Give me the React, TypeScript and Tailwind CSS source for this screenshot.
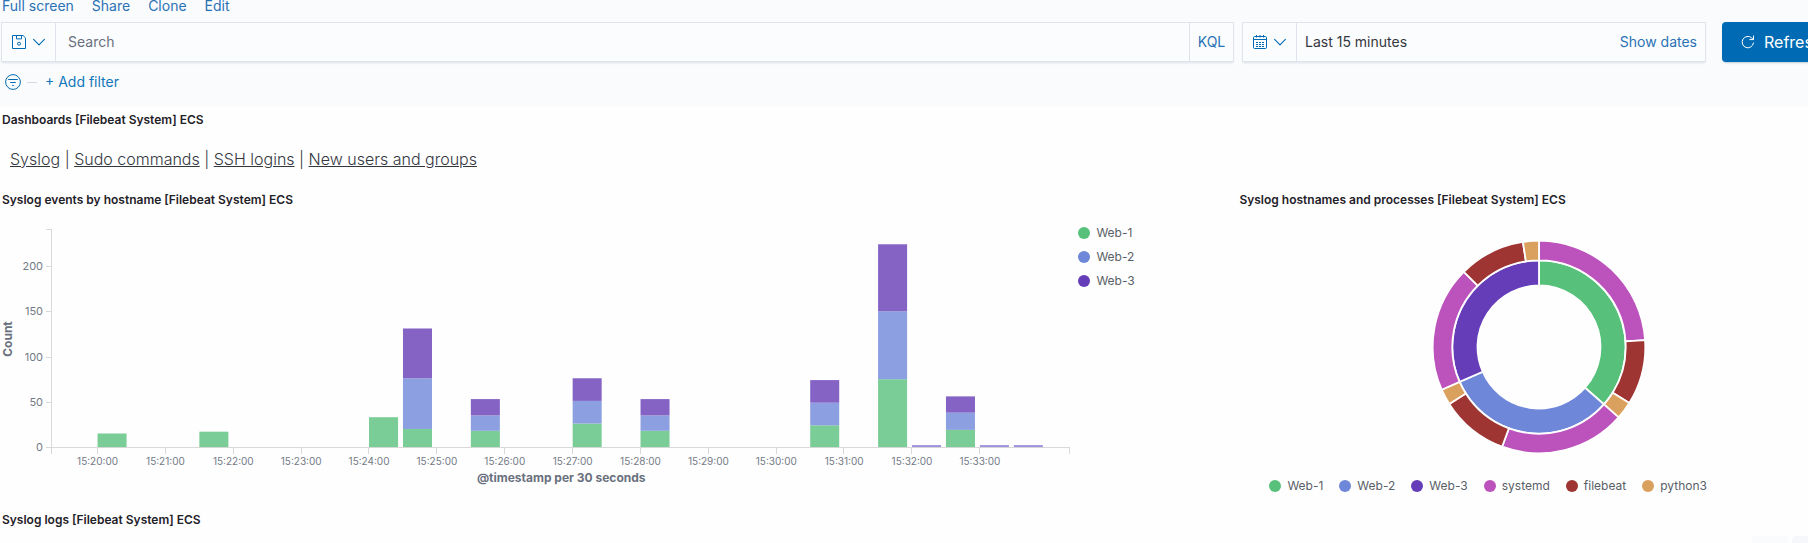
import React from "react";

const GREEN = "#57c17b";
const BLUE = "#6f87d8";
const PURPLE = "#663db8";
const PINK = "#bc52bc";
const RED = "#9e3533";
const TAN = "#daa05d";

function SaveIcon() {
  return (
    <svg width="16" height="16" viewBox="0 0 16 16" fill="none" stroke="#006bb4" aria-hidden="true">
      <path d="M1.5 1.5h10.6l2.4 2.4v10.6h-13z" />
      <path d="M5.5 1.5v3.4h5V1.5" />
      <circle cx="8" cy="9.7" r="1.5" />
    </svg>
  );
}

function Chevron() {
  return (
    <svg width="12" height="16" viewBox="0 0 12 16" fill="none" stroke="#006bb4" strokeWidth="1.1" strokeLinecap="round" strokeLinejoin="round" aria-hidden="true">
      <path d="M0.6 5.4L6 10.8l5.4-5.4" />
    </svg>
  );
}

function CalendarIcon() {
  return (
    <svg width="16" height="16" viewBox="0 0 16 16" fill="none" stroke="#006bb4" aria-hidden="true">
      <rect x="1.5" y="2.5" width="13" height="12" rx="1.2" />
      <path d="M1.5 5.5h13M4.5 1v2.5M8 1v2.5M11.5 1v2.5" />
      <path d="M4 8.5h2M7 8.5h2M10 8.5h2M4 10.5h2M7 10.5h2M10 10.5h2M4 12.5h2M7 12.5h2M10 12.5h2" />
    </svg>
  );
}

function FilterIcon() {
  return (
    <svg width="16" height="16" viewBox="0 0 16 16" fill="none" stroke="#006bb4" aria-hidden="true">
      <circle cx="8" cy="8" r="7.4" />
      <path d="M3.2 5.5h9.6M5.2 8.5h5.6M7.2 11.5h1.6" />
    </svg>
  );
}

function RefreshIcon() {
  return (
    <svg width="16" height="16" viewBox="0 0 16 16" fill="none" stroke="#fff" strokeLinecap="round" aria-hidden="true">
      <path d="M13.5 9a5.7 5.7 0 1 1-1.8-5.1L13.2 5.4" />
      <path d="M13.5 2v3.6H9.8" />
    </svg>
  );
}

const TOP_LINKS = ["Full screen", "Share", "Clone", "Edit"];

function TopNav() {
  return (
    <nav className="flex h-[22px] items-end gap-[18px] pl-0.5 text-sm leading-4 text-[#2a72b5]">
      {TOP_LINKS.map((l) => (
        <a key={l} href="#" className="mb-2">
          {l}
        </a>
      ))}
    </nav>
  );
}

const box = "flex h-10 items-stretch border border-[#dfe3ec] bg-[#fbfcfd] shadow-[0_2px_2px_-1px_rgba(152,162,179,0.3)]";

function QueryBar() {
  return (
    <form className="flex pl-px" onSubmit={(e) => e.preventDefault()}>
      <div className={box + " min-w-0 flex-1"}>
        <button type="button" aria-label="Saved queries" className="flex w-[54px] items-center gap-1.5 border-r border-[#dfe3ec] pl-[9px]">
          <SaveIcon />
          <Chevron />
        </button>
        <input
          aria-label="Search"
          placeholder="Search"
          className="min-w-0 flex-1 bg-transparent px-3 text-sm text-[#343741] outline-none placeholder:text-[#69707d] placeholder:opacity-100"
        />
        <button type="button" className="w-11 border-l border-[#dfe3ec] text-sm text-[#2a72b5]">
          KQL
        </button>
      </div>
      <div className={box + " ml-2 w-[464px]"}>
        <button type="button" aria-label="Quick dates" className="flex w-[54px] items-center gap-1.5 border-r border-[#dfe3ec] pl-[9px]">
          <CalendarIcon />
          <Chevron />
        </button>
        <button type="button" className="flex flex-1 items-center justify-between px-2 text-sm text-[#343741]">
          <span>Last 15 minutes</span>
          <span className="text-[#2a72b5]">Show dates</span>
        </button>
      </div>
      <button
        type="submit"
        className="ml-4 flex h-10 w-[118px] items-center gap-2 rounded bg-[#006bb4] pl-[18px] text-base text-white shadow-[0_2px_2px_-1px_rgba(54,97,126,0.3)]"
      >
        <RefreshIcon />
        Refresh
      </button>
    </form>
  );
}

function FilterBar() {
  return (
    <div className="flex h-[45px] items-center pb-[5px] pl-[5px]">
      <button type="button" aria-label="Filter options">
        <FilterIcon />
      </button>
      <span className="ml-1.5 h-px w-2.5 bg-[#d3dae6]" />
      <a href="#" className="ml-2 text-sm text-[#1277bb]">
        + Add filter
      </a>
    </div>
  );
}

function PanelTitle({ children }: { children: React.ReactNode }) {
  return <h2 className="px-0.5 text-xs leading-6 font-semibold text-[#1f2128]">{children}</h2>;
}

function LegendItem({ color, label }: { color: string; label: string }) {
  return (
    <li className="flex items-center gap-1.5 text-xs leading-6 text-[#5a5e68]">
      <span className="size-3 rounded-full" style={{ backgroundColor: color }} />
      {label}
    </li>
  );
}

// [half-minute slot, Web-1, Web-2, Web-3]
const BARS: [number, number, number, number][] = [
  [0, 15, 0, 0],
  [3, 17, 0, 0],
  [8, 33, 0, 0],
  [9, 20, 56, 55],
  [11, 18, 17, 18],
  [14, 26, 25, 25],
  [16, 18, 17, 18],
  [21, 24, 25, 25],
  [23, 75, 75, 74],
  [24, 0, 1, 1],
  [25, 19, 19, 18],
  [26, 0, 1, 1],
  [27, 0, 1, 1],
];
const UNIT = 0.905;
const BASE = 235;
const FIRST = 97.5;
const MINUTE = 67.85;

function BarChart() {
  const minutes = Array.from({ length: 14 }, (_, i) => i);
  return (
    <svg viewBox="0 0 1072 280" className="block w-full" role="img" aria-label="Syslog events by hostname">
      <g stroke="#d9d9d9" fill="none" shapeRendering="crispEdges">
        <path d={`M46 17.5H51.5V242M46 ${BASE + 0.5}H1069.5V242`} />
        {[50, 100, 150, 200].map((v) => (
          <path key={v} d={`M46 ${Math.round(BASE - v * UNIT) + 0.5}h5`} />
        ))}
        {minutes.map((m) => (
          <path key={m} d={`M${Math.round(FIRST + m * MINUTE - 0.5) + 0.5} ${BASE}v7`} />
        ))}
      </g>
      {BARS.map(([slot, a, b, c]) => {
        const x = FIRST + (slot * MINUTE) / 2;
        if (a === 0) {
          return <rect key={slot} x={x} y={BASE - 2} width="29" height="2" fill="#9f93dc" />;
        }
        return (
          <g key={slot}>
            <rect x={x} y={BASE - a * UNIT} width="29" height={a * UNIT} fill="#7acd96" />
            <rect x={x} y={BASE - (a + b) * UNIT} width="29" height={b * UNIT} fill="#8c9fe0" />
            <rect x={x} y={BASE - (a + b + c) * UNIT} width="29" height={c * UNIT} fill="#8463c5" />
          </g>
        );
      })}
      <g fontSize="11" fill="#737a86">
        {[0, 50, 100, 150, 200].map((v) => (
          <text key={v} x="43" y={BASE - v * UNIT + 4} textAnchor="end">
            {v}
          </text>
        ))}
        {minutes.map((m) => (
          <text key={m} x={FIRST + m * MINUTE} y="253" textAnchor="middle" fontSize="10">
            {`15:${20 + m}:00`}
          </text>
        ))}
      </g>
      <g fontSize="12" fontWeight="700" fill="#69707d" textAnchor="middle">
        <text x="561" y="270">@timestamp per 30 seconds</text>
        <text transform="translate(12 127) rotate(-90)">Count</text>
      </g>
    </svg>
  );
}

function arc(r0: number, r1: number, from: number, to: number) {
  const pt = (r: number, deg: number) => {
    const t = ((deg - 90) * Math.PI) / 180;
    return `${(107 + r * Math.cos(t)).toFixed(2)} ${(107 + r * Math.sin(t)).toFixed(2)}`;
  };
  const large = to - from > 180 ? 1 : 0;
  return `M${pt(r1, from)}A${r1} ${r1} 0 ${large} 1 ${pt(r1, to)}L${pt(r0, to)}A${r0} ${r0} 0 ${large} 0 ${pt(r0, from)}Z`;
}

const INNER: [number, number, string][] = [
  [0, 131.5, GREEN],
  [131.5, 246.3, BLUE],
  [246.3, 360, PURPLE],
];
const OUTER: [number, number, string][] = [
  [0, 86.3, PINK],
  [86.3, 121.8, RED],
  [121.8, 131.5, TAN],
  [131.5, 200.3, PINK],
  [200.3, 237.6, RED],
  [237.6, 246.3, TAN],
  [246.3, 315, PINK],
  [315, 351.3, RED],
  [351.3, 360, TAN],
];

function Donut() {
  return (
    <svg width="214" height="214" viewBox="0 0 214 214" stroke="#fff" strokeWidth="1.8" role="img" aria-label="Syslog hostnames and processes">
      {INNER.map(([a, b, c]) => (
        <path key={a} d={arc(61.5, 86.7, a, b)} fill={c} />
      ))}
      {OUTER.map(([a, b, c]) => (
        <path key={a} d={arc(86.7, 106.3, a, b)} fill={c} />
      ))}
    </svg>
  );
}

const DASHBOARD_LINKS = ["Syslog", "Sudo commands", "SSH logins", "New users and groups"];

export default function App() {
  return (
    <div className="h-screen overflow-hidden bg-[#fefefe] font-['Inter',sans-serif]">
      <div className="-mr-8">
        <header className="bg-[#fafbfd]">
          <TopNav />
          <QueryBar />
          <FilterBar />
        </header>
        <main>
          <section className="pt-px">
            <PanelTitle>Dashboards [Filebeat System] ECS</PanelTitle>
            <p className="px-2.5 pt-[15px] pb-[17px] text-base leading-6 font-light text-[#343741]">
              {DASHBOARD_LINKS.map((l, i) => (
                <React.Fragment key={l}>
                  {i > 0 && " | "}
                  <a href="#" className="underline">
                    {l}
                  </a>
                </React.Fragment>
              ))}
            </p>
          </section>
          <div className="grid h-[320px] grid-cols-[67.25%_1fr]">
            <section>
              <PanelTitle>Syslog events by hostname [Filebeat System] ECS</PanelTitle>
              <div className="flex">
                <div className="min-w-0 flex-1">
                  <BarChart />
                </div>
                <ul className="w-[165px] pt-[9px] pl-1.5">
                  <LegendItem color={GREEN} label="Web-1" />
                  <LegendItem color={BLUE} label="Web-2" />
                  <LegendItem color={PURPLE} label="Web-3" />
                </ul>
              </div>
            </section>
            <section>
              <PanelTitle>Syslog hostnames and processes [Filebeat System] ECS</PanelTitle>
              <div className="flex flex-col items-center pt-7">
                <Donut />
                <ul className="mt-5 flex gap-4 self-start pl-8">
                  <LegendItem color={GREEN} label="Web-1" />
                  <LegendItem color={BLUE} label="Web-2" />
                  <LegendItem color={PURPLE} label="Web-3" />
                  <LegendItem color={PINK} label="systemd" />
                  <LegendItem color={RED} label="filebeat" />
                  <LegendItem color={TAN} label="python3" />
                </ul>
              </div>
            </section>
          </div>
          <section>
            <PanelTitle>Syslog logs [Filebeat System] ECS</PanelTitle>
            <div className="flex justify-end gap-1 pt-1">
              <span className="h-6 w-9 rounded bg-[#fafbfd]" />
              <span className="h-6 w-12 rounded bg-[#f5f7fb]" />
            </div>
          </section>
        </main>
      </div>
    </div>
  );
}
